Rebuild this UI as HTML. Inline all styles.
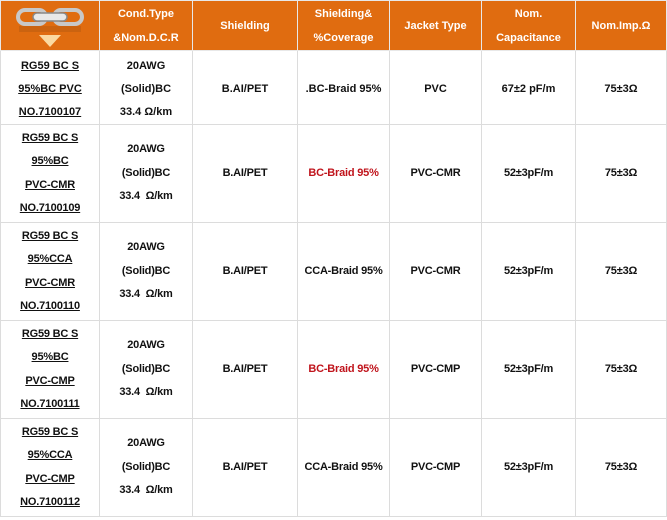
<!DOCTYPE html>
<html><head><style>
body{margin:0;background:#fff;width:667px;height:520px;overflow:hidden;font-family:"Liberation Sans",Arial,sans-serif;}
table{position:absolute;left:0;top:0;border-collapse:collapse;table-layout:fixed;width:666px;}
td{border:1px solid #dcdcdc;text-align:center;vertical-align:middle;font-size:11px;font-weight:bold;color:#111;line-height:23.5px;padding:0;}
tr.h td{background:#e06c10;color:#fff;height:49px;line-height:24px;border-color:#e8e8e8;}
tr.f td{padding-top:3px;line-height:23px;}
u{text-decoration:underline;}
.r{color:#c0141c;}
.n td{letter-spacing:-0.2px;}
</style></head><body>
<table>
<colgroup><col style="width:99px"><col style="width:93px"><col style="width:105px"><col style="width:92px"><col style="width:92px"><col style="width:94px"><col style="width:91px"></colgroup>
<tr class="h"><td>
<svg width="70" height="46" viewBox="0 0 70 46" style="display:block;margin:2px auto 0">
<rect x="3" y="6" width="28" height="14" rx="7" fill="none" stroke="#c8c8c8" stroke-width="4"/>
<rect x="39" y="6" width="28" height="14" rx="7" fill="none" stroke="#c8c8c8" stroke-width="4"/>
<rect x="18" y="9" width="34" height="8" rx="4" fill="#e8e8e8" stroke="#888" stroke-width="1.5"/>
<rect x="4" y="22" width="62" height="6" fill="#b55a10" opacity="0.5"/>
<polygon points="24,31 46,31 35,43" fill="#fbd9a0"/>
</svg></td><td>Cond.Type<br>&amp;Nom.D.C.R</td><td>Shielding</td><td>Shielding&amp;<br>%Coverage</td><td>Jacket Type</td><td>Nom.<br>Capacitance</td><td>Nom.Imp.Ω</td></tr>
<tr class="f" style="height:74px"><td><u>RG59 BC S</u><br><u>95%BC PVC</u><br><u>NO.7100107</u></td><td>20AWG<br>(Solid)BC<br>33.4 Ω/km</td><td>B.AI/PET</td><td>.BC-Braid 95%</td><td>PVC</td><td>67±2 pF/m</td><td>75±3Ω</td></tr>
<tr class="n" style="height:98px"><td><u>RG59 BC S</u><br><u>95%BC</u><br><u>PVC-CMR</u><br><u>NO.7100109</u></td><td>20AWG<br>(Solid)BC<br>33.4 &nbsp;Ω/km</td><td>B.AI/PET</td><td class="r">BC-Braid 95%</td><td>PVC-CMR</td><td>52±3pF/m</td><td>75±3Ω</td></tr>
<tr class="n" style="height:98px"><td><u>RG59 BC S</u><br><u>95%CCA</u><br><u>PVC-CMR</u><br><u>NO.7100110</u></td><td>20AWG<br>(Solid)BC<br>33.4 &nbsp;Ω/km</td><td>B.AI/PET</td><td>CCA-Braid 95%</td><td>PVC-CMR</td><td>52±3pF/m</td><td>75±3Ω</td></tr>
<tr class="n" style="height:98px"><td><u>RG59 BC S</u><br><u>95%BC</u><br><u>PVC-CMP</u><br><u>NO.7100111</u></td><td>20AWG<br>(Solid)BC<br>33.4 &nbsp;Ω/km</td><td>B.AI/PET</td><td class="r">BC-Braid 95%</td><td>PVC-CMP</td><td>52±3pF/m</td><td>75±3Ω</td></tr>
<tr class="n" style="height:98px"><td><u>RG59 BC S</u><br><u>95%CCA</u><br><u>PVC-CMP</u><br><u>NO.7100112</u></td><td>20AWG<br>(Solid)BC<br>33.4 &nbsp;Ω/km</td><td>B.AI/PET</td><td>CCA-Braid 95%</td><td>PVC-CMP</td><td>52±3pF/m</td><td>75±3Ω</td></tr>
</table>
</body></html>
